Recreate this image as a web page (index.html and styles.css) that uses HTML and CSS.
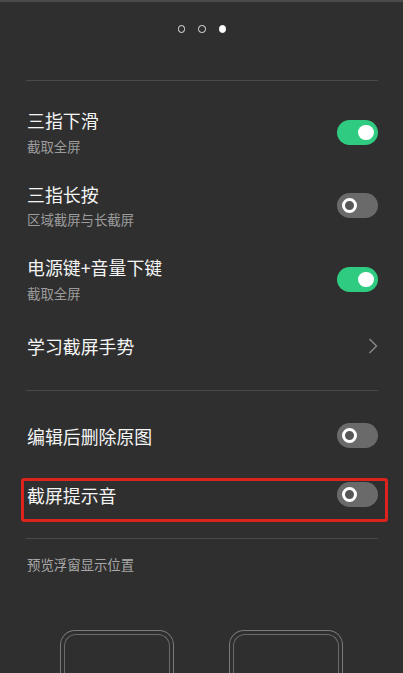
FILE: index.html
```html
<!DOCTYPE html>
<html lang="zh-CN">
<head>
<meta charset="utf-8">
<link rel="stylesheet" href="styles.css">
</head>
<body>
<div class="screen">
  <div class="dots">
    <span class="dot"></span>
    <span class="dot"></span>
    <span class="dot active"></span>
  </div>
  <div class="divider first"></div>
  <div class="group">
    <div class="row tall">
      <div class="texts">
        <div class="title">三指下滑</div>
        <div class="sub">截取全屏</div>
      </div>
      <span class="switch on"><span class="knob"></span></span>
    </div>
    <div class="row tall">
      <div class="texts">
        <div class="title">三指长按</div>
        <div class="sub">区域截屏与长截屏</div>
      </div>
      <span class="switch off"><span class="knob"></span></span>
    </div>
    <div class="row tall">
      <div class="texts">
        <div class="title">电源键+音量下键</div>
        <div class="sub">截取全屏</div>
      </div>
      <span class="switch on"><span class="knob"></span></span>
    </div>
    <div class="row link">
      <div class="title">学习截屏手势</div>
      <svg class="chev" width="10" height="16" viewBox="0 0 10 16"><polyline points="1.5,1 8.5,8 1.5,15" fill="none" stroke="#8a8a8a" stroke-width="1.4"/></svg>
    </div>
  </div>
  <div class="divider second"></div>
  <div class="group">
    <div class="row single">
      <div class="title">编辑后删除原图</div>
      <span class="switch off"><span class="knob"></span></span>
    </div>
    <div class="row single marked">
      <div class="title">截屏提示音</div>
      <span class="switch off"><span class="knob"></span></span>
      <span class="highlight"></span>
    </div>
  </div>
  <div class="divider third"></div>
  <div class="caption">预览浮窗显示位置</div>
  <div class="phones">
    <div class="phone"><div class="phone-inner"></div></div>
    <div class="phone"><div class="phone-inner"></div></div>
  </div>
</div>
</body>
</html>
```
FILE: styles.css
```css
html, body {
  margin: 0;
  padding: 0;
  background: #2f2f2f;
}
body {
  font-family: "Noto Sans CJK SC", "Noto Sans", sans-serif;
  color: #f2f2f2;
  width: 403px;
  height: 673px;
  overflow: hidden;
}
.screen {
  border-top: 2px solid #4a4a4a;
  height: 671px;
  overflow: hidden;
}
.dots {
  display: flex;
  justify-content: center;
  gap: 13px;
  padding-top: 23px;
  height: 8px;
  padding-left: 1px;
}
.dot {
  width: 5.5px;
  height: 5.5px;
  border: 1.3px solid #e6e6e6;
  border-radius: 50%;
}
.dot.active {
  background: #ffffff;
  border-color: #ffffff;
}
.divider {
  height: 1.5px;
  background: #4a4a4a;
  margin: 0 25px 0 26px;
}
.divider.first { margin-top: 46.5px; }
.divider.second { margin-top: 13px; }
.divider.third { margin-top: 13.5px; }
.row {
  display: flex;
  align-items: center;
  justify-content: space-between;
  padding: 0 25px 0 27px;
  position: relative;
}
.row.tall { height: 73.5px; }
.divider.first + .group { padding-top: 14.5px; }
.row.link { height: 60.5px; }
.divider.second + .group { padding-top: 15px; }
.row.single { height: 59px; }
.texts {
  display: flex;
  flex-direction: column;
  gap: 4.5px;
}
.title {
  font-size: 17.9px;
  line-height: 22px;
  color: #f5f5f5;
}
.sub {
  font-size: 13.4px;
  line-height: 20px;
  color: #9c9c9c;
}
.switch {
  width: 41px;
  height: 25px;
  border-radius: 12.5px;
  display: flex;
  align-items: center;
  box-sizing: border-box;
  flex: none;
}
.switch.on {
  background: #2fcb80;
  justify-content: flex-end;
  padding-right: 4.5px;
}
.switch.on .knob {
  width: 15.5px;
  height: 15.5px;
  border-radius: 50%;
  background: #ffffff;
}
.switch.off {
  background: #6a6a6a;
  justify-content: flex-start;
  padding-left: 4.5px;
}
.switch.off .knob {
  width: 15px;
  height: 15px;
  box-sizing: border-box;
  border-radius: 50%;
  border: 3.5px solid #ffffff;
  background: #555555;
}
.highlight {
  position: absolute;
  left: 21px;
  right: 15px;
  top: 13px;
  height: 44px;
  box-sizing: border-box;
  border: 3px solid #dc231d;
  border-radius: 3px;
  pointer-events: none;
}
.caption {
  font-size: 13.4px;
  line-height: 20px;
  color: #a8a8a8;
  padding: 15px 0 0 27px;
}
.phones {
  display: flex;
  justify-content: center;
  gap: 55px;
  margin-top: 56px;
}
.phone {
  width: 114px;
  height: 80px;
  box-sizing: border-box;
  border: 1px solid #7a7a7a;
  border-bottom: none;
  border-radius: 15px 15px 0 0;
  padding: 3px 3px 0 3px;
}
.phone-inner {
  height: 100%;
  box-sizing: border-box;
  border: 1px solid #6a6a6a;
  border-bottom: none;
  border-radius: 12px 12px 0 0;
}
```
